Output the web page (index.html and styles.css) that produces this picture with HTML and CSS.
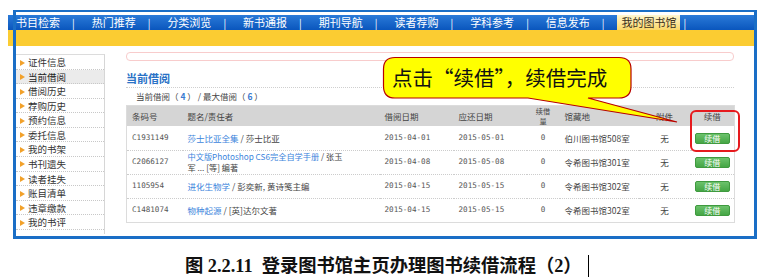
FILE: index.html
```html
<!DOCTYPE html>
<html lang="zh">
<head>
<meta charset="utf-8">
<title>图书续借</title>
<link rel="stylesheet" href="styles.css">
</head>
<body>
<div class="page">
  <div class="shot">
    <nav class="topnav">
      <a class="nav-item">书目检索</a><span class="sep">|</span>
      <a class="nav-item">热门推荐</a><span class="sep">|</span>
      <a class="nav-item">分类浏览</a><span class="sep">|</span>
      <a class="nav-item">新书通报</a><span class="sep">|</span>
      <a class="nav-item">期刊导航</a><span class="sep">|</span>
      <a class="nav-item">读者荐购</a><span class="sep">|</span>
      <a class="nav-item">学科参考</a><span class="sep">|</span>
      <a class="nav-item">信息发布</a><span class="sep">|</span>
      <a class="nav-item active">我的图书馆</a><span class="sep">|</span>
    </nav>
    <div class="yellowbar"></div>
    <div class="content">
      <ul class="side">
        <li>证件信息</li>
        <li class="on">当前借阅</li>
        <li>借阅历史</li>
        <li>荐购历史</li>
        <li>预约信息</li>
        <li>委托信息</li>
        <li>我的书架</li>
        <li>书刊遗失</li>
        <li>读者挂失</li>
        <li>账目清单</li>
        <li>违章缴款</li>
        <li>我的书评</li>
      </ul>
      <main class="main">
        <div class="pinkbox"></div>
        <h2 class="heading">当前借阅</h2>
        <div class="count">当前借阅（ <b>4</b> ） / 最大借阅（ <b>6</b> ）</div>
        <table class="loans">
          <colgroup>
            <col class="c1"><col class="c2"><col class="c3"><col class="c4"><col class="c5"><col class="c6"><col class="c7"><col class="c8">
          </colgroup>
          <thead>
            <tr>
              <th>条码号</th><th>题名/责任者</th><th>借阅日期</th><th>应还日期</th><th class="ctr small">续借<br>量</th><th>馆藏地</th><th class="ctr">附件</th><th class="ctr">续借</th>
            </tr>
          </thead>
          <tbody>
            <tr>
              <td class="mono">C1931149</td>
              <td><a class="book">莎士比亚全集</a> / 莎士比亚</td>
              <td class="mono">2015-04-01</td>
              <td class="mono">2015-05-01</td>
              <td class="ctr mono">0</td>
              <td>伯川图书馆508室</td>
              <td class="ctr">无</td>
              <td class="ctr"><button class="renew">续借</button></td>
            </tr>
            <tr>
              <td class="mono">C2066127</td>
              <td class="two"><a class="book">中文版Photoshop CS6完全自学手册</a> / 张玉<br>军 ... [等] 编著</td>
              <td class="mono">2015-04-08</td>
              <td class="mono">2015-05-08</td>
              <td class="ctr mono">0</td>
              <td>令希图书馆301室</td>
              <td class="ctr">无</td>
              <td class="ctr"><button class="renew">续借</button></td>
            </tr>
            <tr>
              <td class="mono">1105954</td>
              <td><a class="book">进化生物学</a> / 彭奕新, 黄诗笺主编</td>
              <td class="mono">2015-04-15</td>
              <td class="mono">2015-05-15</td>
              <td class="ctr mono">0</td>
              <td>令希图书馆302室</td>
              <td class="ctr">无</td>
              <td class="ctr"><button class="renew">续借</button></td>
            </tr>
            <tr>
              <td class="mono">C1481074</td>
              <td><a class="book">物种起源</a> / [英]达尔文著</td>
              <td class="mono">2015-04-15</td>
              <td class="mono">2015-05-15</td>
              <td class="ctr mono">0</td>
              <td>令希图书馆302室</td>
              <td class="ctr">无</td>
              <td class="ctr"><button class="renew">续借</button></td>
            </tr>
          </tbody>
        </table>
      </main>
    </div>
  </div>
  <div class="frame"></div>
  <div class="redbox"></div>
  <div class="callout">
    <svg class="callout-shape" width="300" height="70" viewBox="0 0 300 70">
      <path d="M15 2.5 H239 Q251 2.5 251 14 V31 Q251 43 239 43 H208 L297 67 L148 43 H15 Q3.5 43 3.5 31 V14 Q3.5 2.5 15 2.5 Z" fill="#ffff00" stroke="#b80000" stroke-width="1.2"/>
    </svg>
    <span class="callout-text">点击“续借”，续借完成</span>
  </div>
  <p class="caption">图 <span class="num">2.2.11</span>&nbsp; 登录图书馆主页办理图书续借流程（2）<span class="cursor"></span></p>
</div>
</body>
</html>
```

FILE: styles.css
```css
* { box-sizing: border-box; }
html, body { margin: 0; padding: 0; background: #fff; }
body { font-family: "Noto Sans CJK SC", "Noto Sans", sans-serif; color: #333; }

.page { position: relative; width: 767px; height: 279px; overflow: hidden; }

.shot { margin: 0 0 0 8px; padding-top: 15px; width: 748px; height: 239px; }

.topnav {
  display: flex; align-items: center; height: 15px; padding-left: 8px;
  background: linear-gradient(#2a7ad8, #0a56bd);
  font-size: 11px; line-height: 15px; color: #fff; white-space: nowrap;
}
.nav-item { display: block; width: 44px; margin-right: 12px; }
.sep { display: block; width: 3px; margin-right: 16.7px; font-size: 10px; }
.nav-item.active {
  width: auto; margin-left: -5px; margin-right: 4px; padding: 0 3px 0 5px;
  background: linear-gradient(#fff6d0, #fbd867);
  color: #3a3020; height: 15px;
}

.yellowbar { height: 16px; background: #fbcc32; }

.content { display: flex; padding-left: 8px; }

.side {
  list-style: none; margin: 8px 0 0 0; padding: 0; width: 89px;
  border-top: 1px solid #dcdcdc; border-right: 1px solid #d6d6d6;
  padding-bottom: 4px;
}
.side li {
  position: relative; height: 14.57px; line-height: 14px;
  padding-left: 12px; font-size: 9.5px; color: #333;
  border-bottom: 1px dotted #c8c8c8;
}
.side li::before {
  content: ""; position: absolute; left: 4px; top: 4.5px;
  border-left: 5px solid #f2a12a; border-top: 3px solid transparent; border-bottom: 3px solid transparent;
}
.side li.on { background: #ebebeb; color: #222; }

.main { width: 608px; margin-left: 21px; padding-top: 6px; }

.pinkbox { height: 9px; border: 1px solid #f8cccc; border-radius: 4px; }

.heading {
  margin: 8px 0 0 0; height: 19px; line-height: 18px;
  font-size: 11px; font-weight: bold; color: #2a72c6;
  border-bottom: 1px dotted #cfcfcf;
}
.count { height: 17px; line-height: 17px; padding-left: 10px; font-size: 8.5px; color: #444; }
.count b { color: #3a7ad0; font-weight: bold; }

.loans {
  width: 608px; table-layout: fixed; border-collapse: collapse;
  border: 1px solid #dcdcdc; font-size: 8.5px; color: #444;
}
.loans col.c1 { width: 56px; }
.loans col.c2 { width: 197px; }
.loans col.c3 { width: 74px; }
.loans col.c4 { width: 73px; }
.loans col.c5 { width: 33px; }
.loans col.c6 { width: 79px; }
.loans col.c7 { width: 52px; }
.loans col.c8 { width: 44px; }
.loans th {
  height: 20px; background: #d5d5d5; font-weight: normal; text-align: left;
  padding: 0 0 0 5px; line-height: 10px; color: #444;
}
.loans th.small { font-size: 7.2px; line-height: 10px; padding: 0; }
.loans td {
  height: 24px; padding: 0 0 0 5px; line-height: 10px;
  border-bottom: 1px dotted #cccccc; white-space: nowrap;
}
.loans tbody tr:last-child td { border-bottom: none; }
.loans td.two { white-space: normal; font-size: 8.2px; line-height: 11.6px; }
.loans .ctr { text-align: center; padding-left: 0; }
.mono { font-family: "DejaVu Sans Mono", monospace; font-size: 7.6px; color: #555; }
.book { color: #3d85dc; }

.renew {
  display: inline-block; width: 35px; height: 11px; padding: 0; margin: 0;
  border: 1px solid #3f9a3f; border-radius: 2px;
  background: linear-gradient(#6cc26c, #45a645);
  color: #fff; font: 8px/9px "Noto Sans CJK SC", sans-serif;
  vertical-align: middle;
}

.frame {
  position: absolute; left: 13px; top: 10px; width: 744px; height: 229px;
  border: 3px solid #1a6ec6; border-top-width: 2px;
  pointer-events: none;
}

.redbox {
  position: absolute; left: 690px; top: 110px; width: 50px; height: 42px;
  border: 2px solid #e61a1e; border-radius: 6px;
}

.callout { position: absolute; left: 380px; top: 55px; width: 300px; height: 70px; }
.callout-shape { position: absolute; left: 0; top: 0; }
.callout-text {
  position: relative; display: block; padding: 11px 0 0 12px;
  font-size: 20.5px; line-height: 22px; color: #111; white-space: nowrap;
}

.caption {
  margin: 0; position: absolute; left: 185px; top: 255px; height: 22px;
  font-family: "Liberation Serif", "Noto Sans CJK SC", serif;
  font-size: 18.3px; font-weight: bold; line-height: 22px; color: #111; white-space: nowrap;
}
.caption .num { font-family: "Liberation Serif", serif; }
.cursor {
  display: inline-block; width: 1px; height: 22px; margin-left: 6px;
  background: #000; vertical-align: top;
}
```
